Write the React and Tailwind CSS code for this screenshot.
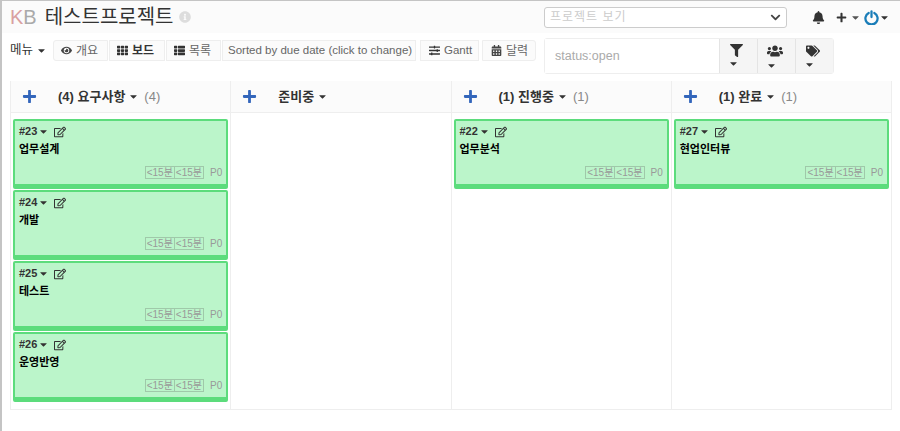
import React from 'react';
import { FaEye, FaTh, FaThList, FaSlidersH, FaCalendarAlt, FaFilter, FaUsers, FaTags, FaBell, FaPlus, FaCaretDown, FaRegEdit, FaInfoCircle, FaChevronDown } from 'react-icons/fa';

const font = { sans: "font-['Liberation_Sans','Noto_Sans_CJK_KR',sans-serif]" };

const columns = [
  { title: '(4) 요구사항', count: '(4)', cards: [['#23', '업무설계'], ['#24', '개발'], ['#25', '테스트'], ['#26', '운영반영']] },
  { title: '준비중', count: '', cards: [] },
  { title: '(1) 진행중', count: '(1)', cards: [['#22', '업무분석']] },
  { title: '(1) 완료', count: '(1)', cards: [['#27', '현업인터뷰']] },
];

const Caret = ({ className = '' }) => <FaCaretDown className={`inline-block text-[11px] ${className}`} />;

const ToolButton = ({ icon, label, className = '' }) => (
  <div className={`flex h-[21px] shrink-0 items-center gap-[4px] whitespace-nowrap border border-[#eeeeee] bg-[#fbfbfb] text-[#666] ${className}`}>
    {icon}
    <span>{label}</span>
  </div>
);

const Card = ({ id, title }) => (
  <div className="h-[70px] shrink-0 rounded-[2px] border-2 border-b-[5px] border-[#5cdc7c] bg-[#bbf5ca] px-[4px] pt-[2px]">
    <div className="flex h-[17px] items-center text-[11px] font-bold text-[#333]">
      <span>{id}</span>
      <Caret className="ml-[1px] text-[#333]" />
      <FaRegEdit className="ml-[5px] text-[12px] text-[#333]" />
    </div>
    <div className="mt-[1px] h-[17px] text-[11px] font-bold leading-[17px] text-black">{title}</div>
    <div className="mt-[8px] flex items-center justify-end text-[10px] leading-[11px] text-[#999]">
      <span className="border border-[#9fc9a9] px-[1px]">&lt;15분</span>
      <span className="border border-l-0 border-[#9fc9a9] px-[1px]">&lt;15분</span>
      <span className="ml-[6px]">P0</span>
    </div>
  </div>
);

const Column = ({ column, last }) => (
  <div className={`flex flex-1 flex-col border-[#eeeeee] ${last ? '' : 'border-r'}`}>
    <div className="flex h-[32px] items-center border-b border-[#eeeeee] bg-[#fbfbfb] pl-[11px]">
      <FaPlus className="text-[15px] text-[#3366bb]" />
      <div className="ml-[21px] flex items-center text-[13px] font-bold text-[#333]">
        <span>{column.title}</span>
        <Caret className="ml-[3px] text-[#333]" />
      </div>
      {column.count && <span className="ml-[5px] text-[13px] text-[#888]">{column.count}</span>}
    </div>
    <div className="flex flex-col gap-[1px] px-[2px] pt-[6px]">
      {column.cards.map(([id, title]) => <Card key={id} id={id} title={title} />)}
    </div>
  </div>
);

export default function App() {
  return (
    <div className={`h-[431px] w-[900px] overflow-hidden border-t border-l-2 border-[#c4c4c4] bg-white ${font.sans}`}>
      <div className="flex h-[32px] items-center justify-between bg-[#fbfbfb] pl-[8px] pr-[10px]">
        <div className="flex items-center">
          <span className="text-[20px] text-[#d9a0a0]">K</span>
          <span className="text-[20px] text-[#aaa]">B</span>
          <span className="ml-[8px] text-[20px] text-[#333]">테스트프로젝트</span>
          <FaInfoCircle className="ml-[5px] text-[12px] text-[#ddd]" />
        </div>
        <div className="flex items-center">
          <div className="flex h-[21px] w-[243px] items-center justify-between rounded-[3px] border border-[#cccccc] bg-white pl-[5px] pr-[5px]">
            <span className="text-[12px] tracking-[1px] text-[#ccc]">프로젝트 보기</span>
            <FaChevronDown className="text-[11px] text-[#444]" />
          </div>
          <FaBell className="ml-[25px] text-[13px] text-[#333]" />
          <FaPlus className="ml-[11px] text-[11px] text-[#333]" />
          <Caret className="ml-[3px] text-[#555]" />
          <svg className="ml-[3px]" width="15" height="15" viewBox="0 0 16 16" fill="none" stroke="#1a7db8" strokeWidth="2.4" strokeLinecap="round">
            <path d="M5 3.2a6.5 6.5 0 1 0 6 0" />
            <path d="M8 1.5v6" />
          </svg>
          <Caret className="text-[#333]" />
        </div>
      </div>

      <div className="flex h-[48px] items-start pl-[8px] pr-[9px] pt-[5px]">
        <div className="mt-[2px] flex h-[21px] w-[43px] shrink-0 items-center whitespace-nowrap text-[12.5px] text-[#333]">
          <span>메뉴</span>
          <Caret className="ml-[3px]" />
        </div>
        <div className="mt-[2px] flex w-[484px] shrink-0 items-start">
          <ToolButton icon={<FaEye className="text-[11px] text-[#444]" />} label="개요" className="w-[55px] rounded-l-[3px] pl-[7px] text-[12px]" />
          <ToolButton icon={<FaTh className="text-[11px] text-[#333]" />} label={<b className="text-[#333]">보드</b>} className="ml-[1px] w-[56px] pl-[7px] text-[12px]" />
          <ToolButton icon={<FaThList className="text-[11px] text-[#333]" />} label="목록" className="ml-[1px] w-[55px] pl-[7px] text-[12px]" />
          <ToolButton label="Sorted by due date (click to change)" className="ml-[1px] w-[194px] pl-[5px] text-[11.5px]" />
          <ToolButton icon={<FaSlidersH className="text-[11px] text-[#333]" />} label="Gantt" className="ml-[4px] w-[59px] pl-[8px] text-[11.5px]" />
          <ToolButton icon={<FaCalendarAlt className="text-[11px] text-[#444]" />} label="달력" className="ml-[3px] w-[54px] rounded-r-[3px] pl-[8px] text-[12px]" />
        </div>
        <div className="ml-[7px] flex h-[36px] w-[290px] rounded-[3px] border border-[#eeeeee]">
          <div className="flex flex-1 items-center bg-white pl-[10px] text-[12.5px] text-[#aaa]">status:open</div>
          {[<FaFilter key="f" className="ml-[10px] text-[13px]" />, <FaUsers key="u" className="ml-[9px] text-[16px]" />, <FaTags key="t" className="ml-[10px] text-[14px]" />].map((icon, i) => (
            <div key={i} className="flex w-[38px] flex-col items-start justify-center border-l border-[#e4e4e4] bg-[#f5f5f5] pt-[1px] text-[#333]">
              {icon}
              <Caret className="ml-[8px] mt-[1px]" />
            </div>
          ))}
        </div>
      </div>

      <div className="ml-[8px] flex h-[329px] w-[882px] border-b border-r border-l border-[#eeeeee]">
        {columns.map((column, i) => <Column key={column.title} column={column} last={i === columns.length - 1} />)}
      </div>
    </div>
  );
}
